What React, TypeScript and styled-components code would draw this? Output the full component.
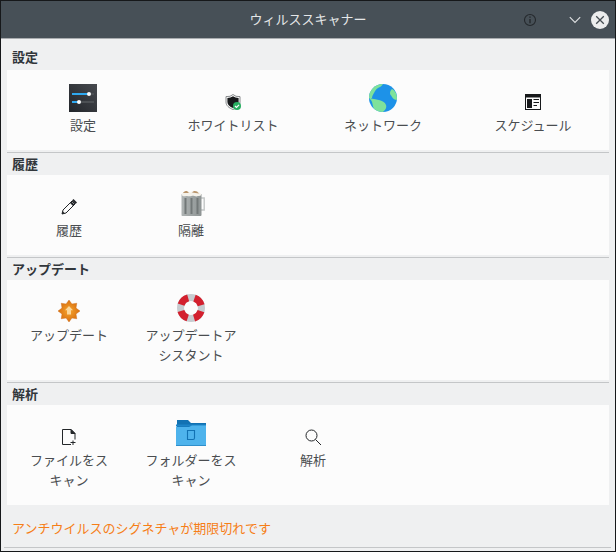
import React from "react";
import styled, { createGlobalStyle } from "styled-components";

const GlobalStyle = createGlobalStyle`
  html, body {
    margin: 0;
    padding: 0;
    background: #eff0f1;
  }
`;

const Window = styled.div`
  box-sizing: border-box;
  width: 616px;
  height: 552px;
  display: flex;
  flex-direction: column;
  border: 1px solid #16181a;
  background: #eff0f1;
  color: #4d4d4d;
  font-family: "Noto Sans CJK JP", "Noto Sans", sans-serif;
  font-size: 13px;
  overflow: hidden;
`;

const TitleBar = styled.div`
  flex: none;
  height: 37px;
  display: grid;
  grid-template-columns: 1fr auto 1fr;
  align-items: center;
  background: #475057;
  border-bottom: 1px solid #a9acaf;
`;

const Title = styled.div`
  color: #e4e6e7;
  font-size: 13px;
  line-height: 18px;
  padding-bottom: 1px;
  grid-column: 2;
`;

const Controls = styled.div`
  grid-column: 3;
  display: flex;
  align-items: center;
  justify-content: flex-end;
  padding-right: 6px;
`;

const ControlSlot = styled.div<{ $gap: number }>`
  display: flex;
  margin-left: ${(p) => p.$gap}px;
`;

const Section = styled.section``;

const SectionHeader = styled.h2<{ $first?: boolean }>`
  margin: 0;
  box-sizing: border-box;
  height: ${(p) => (p.$first ? 31 : 22)}px;
  padding: 0 0 ${(p) => (p.$first ? 4 : 2)}px 11px;
  display: flex;
  align-items: flex-end;
  font-size: 13px;
  line-height: 18px;
  font-weight: 700;
  color: #31363b;
`;

const Panel = styled.div<{ $tall?: boolean; $grid: number }>`
  margin: 0 6px;
  padding-left: 1px;
  height: ${(p) => (p.$tall ? 100 : 80)}px;
  background: #fcfcfc;
  display: grid;
  grid-template-columns: repeat(auto-fill, ${(p) => p.$grid}px);
`;

const Rule = styled.div`
  height: 1px;
  margin: 2px 6px 0;
  background: #c4c6c8;
`;

const Item = styled.div`
  box-sizing: border-box;
  padding: 14px 15px 0;
  display: flex;
  flex-direction: column;
  align-items: center;
`;

const IconBox = styled.div`
  height: 28px;
  display: flex;
  align-items: flex-end;
  justify-content: center;
`;

const ItemLabel = styled.div`
  margin-top: 3px;
  text-align: center;
  line-height: 20px;
  color: #4a4d50;
  line-break: strict;
`;

const Footer = styled.div`
  flex: 1;
  display: flex;
  flex-direction: column;
`;

const Warning = styled.div`
  margin: 13px 0 0 11px;
  color: #f67e17;
  font-size: 13px;
  line-height: 20px;
`;

const FooterRule = styled.div`
  margin: 9px 4px 0 3px;
  height: 1px;
  background: #c4c6c8;
`;

const BigSvg = styled.svg`
  display: block;
`;

const SmallSvg = styled.svg`
  display: block;
  margin-bottom: 2px;
`;

const FolderSvg = styled.svg`
  display: block;
  margin-bottom: 1px;
`;

const InfoIcon = () => (
  <svg width="14" height="14" viewBox="0 0 14 14" fill="none" stroke="#24282c">
    <circle cx="7" cy="7" r="5.5" strokeWidth="1.1" />
    <path d="M7 6v4.2M7 3.6v1.2" strokeWidth="1.4" />
  </svg>
);

const ChevronIcon = () => (
  <svg width="12" height="8" viewBox="0 0 12 8" fill="none" stroke="#dfe1e3" strokeWidth="1.1">
    <path d="M.8 1.2 6 6.4l5.2-5.2" />
  </svg>
);

const CloseIcon = () => (
  <svg width="18" height="18" viewBox="0 0 18 18">
    <circle cx="9" cy="9" r="9" fill="#eceded" />
    <path d="M5.2 5.2l7.6 7.6M12.800 5.2l-7.6 7.6" stroke="#454c52" strokeWidth="1.3" />
  </svg>
);

const SettingsIcon = () => (
  <BigSvg width="28" height="28" viewBox="0 0 28 28">
    <defs>
      <linearGradient id="setbg" x1="0" y1="1" x2="1" y2="0">
        <stop offset="0" stopColor="#22252a" />
        <stop offset="1" stopColor="#474a4f" />
      </linearGradient>
    </defs>
    <rect width="28" height="28" fill="url(#setbg)" />
    <rect x="3" y="9" width="22" height="2" fill="#4c5054" />
    <rect x="3" y="17" width="22" height="2" fill="#4c5054" />
    <rect x="3" y="9" width="17" height="2" fill="#2fa9f0" />
    <rect x="3" y="17" width="7" height="2" fill="#2fa9f0" />
    <circle cx="20" cy="10" r="2" fill="#fcfcfc" />
    <circle cx="10" cy="18" r="2" fill="#fcfcfc" />
  </BigSvg>
);

const ShieldIcon = () => (
  <SmallSvg width="16" height="16" viewBox="0 0 16 16">
    <path d="M8 .5 11 2.300 15 2.600V8c0 3.600-3 6-7 7.500C4 14 1 11.600 1 8V2.600L5 2.300Z" fill="#fcfcfc" stroke="#6a6d70" strokeWidth=".8" />
    <path d="M8 2.300 10.600 3.600 13.600 3.900V8c0 2.800-2.400 4.800-5.600 6C4.800 12.800 2.400 10.800 2.400 8V3.900L5.400 3.600Z" fill="#17191b" />
    <circle cx="12" cy="12" r="4" fill="#27ae60" />
    <path d="M10 12l1.500 1.500L14 10.800" fill="none" stroke="#fcfcfc" strokeWidth="1.2" />
  </SmallSvg>
);

const GlobeIcon = () => (
  <BigSvg width="28" height="28" viewBox="0 0 28 28">
    <defs>
      <clipPath id="globe">
        <circle cx="14" cy="14" r="14" />
      </clipPath>
    </defs>
    <circle cx="14" cy="14" r="14" fill="#1d92e8" />
    <g clipPath="url(#globe)" fill="#7ee29b">
      <path d="M5 0h9c-1 2-3 3-5 4S6 7 5 9s-2 3-2 5H0V5Z" />
      <path d="M0 13c2 1 3 2 5 2s3 1 5 1c3 1 6 2 7 5s-1 5-3 7H7C4 25 4 21 3 18s-3-3-3-5Z" />
      <path d="M23 5c2 1 5 4 5 8v3c-2 0-4-1-5-3s-2-2-2-4 1-3 2-4Z" />
    </g>
  </BigSvg>
);

const ScheduleIcon = () => (
  <SmallSvg width="16" height="16" viewBox="0 0 16 16">
    <rect x=".5" y=".5" width="15" height="15" fill="#fcfcfc" stroke="#17191b" />
    <rect x="0" y="0" width="16" height="3.500" fill="#17191b" />
    <rect x="2" y="5" width="5" height="9" fill="#17191b" />
    <path d="M8.500 5.500H14M8.500 8.500H14M8.500 11.500H12" stroke="#17191b" />
  </SmallSvg>
);

const PencilIcon = () => (
  <SmallSvg width="16" height="16" viewBox="0 0 16 16" fill="none">
    <path d="M1 15l1-4L11 2l3 3-9 9Z" stroke="#232629" strokeWidth="1" fill="#fcfcfc" />
    <path d="M11 1.500 12.500 0 16 3.500 14.500 5Z" fill="#232629" />
    <path d="M10.500 2.500 13.500 5.500 12 7 9 4Z" fill="#232629" />
    <path d="M1 15l.6-3 2.400 2.400Z" fill="#232629" />
  </SmallSvg>
);

const QuarantineIcon = () => (
  <BigSvg width="28" height="28" viewBox="0 0 28 28">
    <defs>
      <linearGradient id="can" x1="0" y1="0" x2="1" y2="0">
        <stop offset="0" stopColor="#aeb3b3" />
        <stop offset="1" stopColor="#8e9494" />
      </linearGradient>
    </defs>
    <path d="M24 9h3.200v12H24" fill="none" stroke="#c2c6c6" strokeWidth="1.400" />
    <path d="M4.500 5h20v21c0 .6-.6 1-1 1h-18c-.6 0-1-.4-1-1Z" fill="url(#can)" />
    <path d="M8.500 9v16M14.500 9v16M20.500 9v16" stroke="#727878" strokeWidth="2" />
    <path d="M4.500 6c0-2 2-3 4-4s3 1 5 1.500C15 2 17 1.500 19 2s5 2 5.500 4c-2 1.500-3 .5-5 1.500-2 0-3-1-5-.5-3 1-4-.5-5.500 0s-3 .5-4.500-1Z" fill="#f4f1ea" />
    <path d="M6 4c1-1.500 2-2 4-2l2 2ZM15 3.500c1-1.500 3-2 5-1l2 2Z" fill="#b9956d" />
  </BigSvg>
);

const UpdateIcon = () => {
  const spikes = Array.from({ length: 8 }, (_, i) => {
    const a = (i * Math.PI) / 4;
    const b = a + Math.PI / 8;
    const r = 11;
    const n = 7.6;
    return `${i === 0 ? "M" : "L"}${(11 + r * Math.sin(a)).toFixed(2)} ${(11 - r * Math.cos(a)).toFixed(2)}L${(11 + n * Math.sin(b)).toFixed(2)} ${(11 - n * Math.cos(b)).toFixed(2)}`;
  }).join("");
  return (
    <BigSvg width="22" height="22" viewBox="0 0 22 22">
      <defs>
        <radialGradient id="upd">
          <stop offset="0" stopColor="#f6a52f" />
          <stop offset="1" stopColor="#d9700f" />
        </radialGradient>
      </defs>
      <path d={`${spikes}Z`} fill="url(#upd)" stroke="#c9660f" strokeWidth=".4" />
      <path d="M11 6 15 10.200H13v4.300H9v-4.300H7Z" fill="#fbd79a" />
    </BigSvg>
  );
};

const LifebuoyIcon = () => (
  <BigSvg width="28" height="28" viewBox="0 0 28 28" fill="none">
    <circle cx="14" cy="14" r="10.500" stroke="#c7ccd0" strokeWidth="7" />
    <circle
      cx="14"
      cy="14"
      r="10.500"
      stroke="#d3202e"
      strokeWidth="7"
      strokeDasharray="10 6.490"
      strokeDashoffset="-3.250"
    />
  </BigSvg>
);

const FileAddIcon = () => (
  <SmallSvg width="16" height="16" viewBox="0 0 16 16" fill="none" stroke="#232629">
    <path d="M10 15.500H1.500V.5H10l4 4v6" />
    <path d="M10 .5l4 4h-4Z" fill="#232629" />
    <path d="M12 11.500V16M9.500 13.500h5" strokeWidth="1" />
  </SmallSvg>
);

const FolderIcon = () => (
  <FolderSvg width="30" height="26" viewBox="0 0 30 26">
    <path d="M1 0h11l3 3h15v6H1Z" fill="#1272b3" />
    <rect x="0" y="4.500" width="30" height="2" fill="#1d84c8" />
    <path d="M0 7h13l3-1.500h14V26H0Z" fill="#4eb3ec" />
    <rect x="0" y="25" width="30" height="1" fill="#2f8fcb" />
    <path d="M11.500 10.500h7V18c0 .6-.6 1.500-1.500 1.500h-5.500Z" fill="none" stroke="#1272b3" strokeWidth="1.100" />
  </FolderSvg>
);

const SearchIcon = () => (
  <SmallSvg width="16" height="16" viewBox="0 0 16 16" fill="none" stroke="#232629">
    <circle cx="6.500" cy="6.500" r="5.500" />
    <path d="M10.500 10.500 16 16" />
  </SmallSvg>
);

type Entry = { icon: React.ReactNode; label: string };

const groups: { title: string; grid: number; tall?: boolean; items: Entry[] }[] = [
  {
    title: "設定",
    grid: 150,
    items: [
      { icon: <SettingsIcon />, label: "設定" },
      { icon: <ShieldIcon />, label: "ホワイトリスト" },
      { icon: <GlobeIcon />, label: "ネットワーク" },
      { icon: <ScheduleIcon />, label: "スケジュール" },
    ],
  },
  {
    title: "履歴",
    grid: 122,
    items: [
      { icon: <PencilIcon />, label: "履歴" },
      { icon: <QuarantineIcon />, label: "隔離" },
    ],
  },
  {
    title: "アップデート",
    grid: 122,
    tall: true,
    items: [
      { icon: <UpdateIcon />, label: "アップデート" },
      { icon: <LifebuoyIcon />, label: "アップデートアシスタント" },
    ],
  },
  {
    title: "解析",
    grid: 122,
    tall: true,
    items: [
      { icon: <FileAddIcon />, label: "ファイルをスキャン" },
      { icon: <FolderIcon />, label: "フォルダーをスキャン" },
      { icon: <SearchIcon />, label: "解析" },
    ],
  },
];

const App = () => {
  return (
    <>
      <GlobalStyle />
      <Window lang="ja">
        <TitleBar>
          <Title>ウィルススキャナー</Title>
          <Controls>
            <ControlSlot $gap={0}>
              <InfoIcon />
            </ControlSlot>
            <ControlSlot $gap={32}>
              <ChevronIcon />
            </ControlSlot>
            <ControlSlot $gap={10}>
              <CloseIcon />
            </ControlSlot>
          </Controls>
        </TitleBar>
        {groups.map((group, i) => (
          <Section key={group.title}>
            <SectionHeader $first={i === 0}>{group.title}</SectionHeader>
            <Panel $grid={group.grid} $tall={group.tall}>
              {group.items.map((item) => (
                <Item key={item.label}>
                  <IconBox>{item.icon}</IconBox>
                  <ItemLabel>{item.label}</ItemLabel>
                </Item>
              ))}
            </Panel>
            {i < groups.length - 1 && <Rule />}
          </Section>
        ))}
        <Footer>
          <Warning>アンチウイルスのシグネチャが期限切れです</Warning>
          <FooterRule />
        </Footer>
      </Window>
    </>
  );
};

export default App;
